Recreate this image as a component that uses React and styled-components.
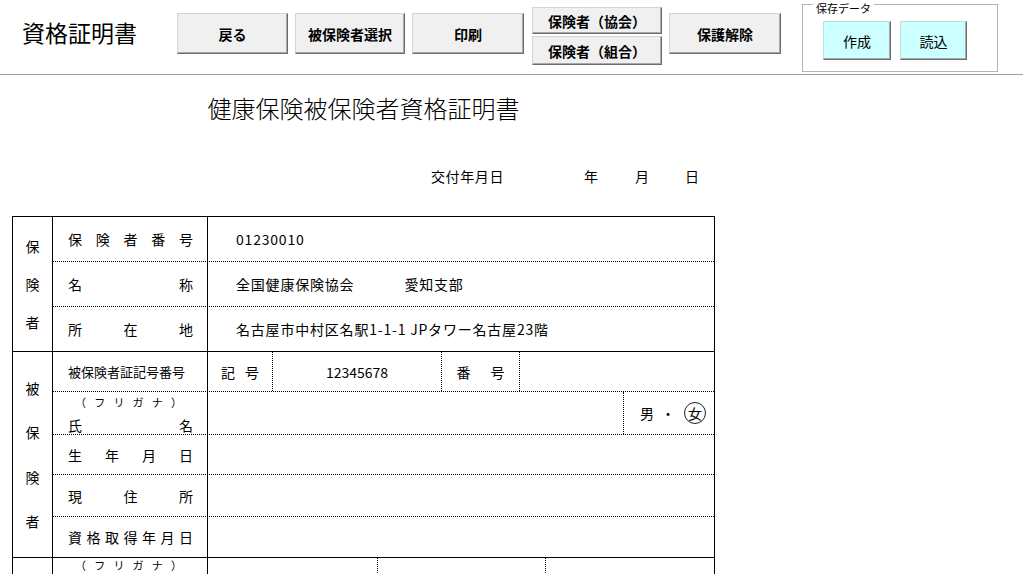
import React from "react"
import styled, { createGlobalStyle } from "styled-components"

const GlobalStyle = createGlobalStyle`
  html, body {
    margin: 0;
    padding: 0;
    background: #fff;
  }
  body {
    font-family: "Noto Sans CJK JP", "Noto Sans", sans-serif;
    color: #000;
    overflow: hidden;
  }
  * {
    box-sizing: border-box;
  }
`

const Page = styled.div`
  width: 1023px;
  height: 574px;
  overflow: hidden;
`

const Toolbar = styled.header`
  display: flex;
  align-items: flex-start;
  height: 75px;
  padding-left: 22px;
  border-bottom: 1px solid #a0a0a0;
`

const AppTitle = styled.h1`
  margin: 16px 0 0;
  width: 155px;
  font-size: 23px;
  line-height: 32px;
  font-weight: 400;
`

const ToolButton = styled.button`
  flex: none;
  width: ${p => p.$w}px;
  height: ${p => p.$h || 41}px;
  margin: ${p => p.$top ?? 13}px 0 0 ${p => p.$left ?? 7}px;
  padding: 0;
  font-family: inherit;
  font-size: 14px;
  font-weight: 700;
  color: #000;
  background: #f0f0f0;
  border: 1px solid;
  border-color: #d4d4d4 #6d6d6d #6d6d6d #d4d4d4;
  box-shadow: inset -1px -1px 0 #a8a8a8;
`

const ButtonStack = styled.div`
  display: flex;
  flex-direction: column;
  gap: 2px;
  margin: 7px 0 0 8px;
`

const SaveGroup = styled.div`
  position: relative;
  display: flex;
  gap: 9px;
  width: 196px;
  height: 68px;
  margin: 4px 0 0 21px;
  padding: 16px 0 0 20px;
  border: 1px solid #b4b4b4;
`

const GroupLegend = styled.span`
  position: absolute;
  top: -5px;
  left: 10px;
  padding: 0 3px;
  background: #fff;
  font-size: 11px;
  line-height: 16px;
`

const SaveButton = styled.button`
  width: ${p => p.$w}px;
  height: 39px;
  padding: 0;
  font-family: inherit;
  font-size: 14px;
  color: #000;
  background: #ccffff;
  border: 1px solid;
  border-color: #b8dede #6d6d6d #6d6d6d #b8dede;
  box-shadow: inset -1px -1px 0 #a8a8a8;
`

const Sheet = styled.main`
  width: 715px;
  padding-left: 12px;
`

const DocTitle = styled.h2`
  margin: 17px 0 0;
  text-align: center;
  font-size: 24px;
  line-height: 32px;
  font-weight: 300;
`

const IssueRow = styled.div`
  display: flex;
  justify-content: flex-end;
  margin-top: 42px;
  padding-right: 16px;
  font-size: 14px;
  line-height: 20px;
`

const IssuePart = styled.span`
  margin-left: ${p => p.$gap || 0}px;
  letter-spacing: ${p => p.$ls || 0}px;
`

const Form = styled.div`
  margin-top: 30px;
  width: 703px;
  border: 1px solid #000;
  border-bottom: none;
  font-size: 14px;
`

const Section = styled.section`
  display: flex;
  height: ${p => p.$h}px;
  border-bottom: ${p => (p.$last ? "none" : "1px solid #000")};
`

const SideLabel = styled.div`
  flex: none;
  width: 40px;
  border-right: 1px solid #000;
  display: flex;
  flex-direction: column;
  align-items: center;
  justify-content: space-evenly;
  line-height: 18px;
`

const Rows = styled.div`
  flex: 1;
  display: flex;
  flex-direction: column;
`

const Row = styled.div`
  display: flex;
  flex: none;
  height: ${p => p.$h}px;
  border-bottom: ${p => (p.$last ? "none" : "1px dotted #000")};
`

const Label = styled.div`
  flex: none;
  width: 155px;
  border-right: 1px solid #000;
  display: flex;
  flex-direction: column;
  justify-content: ${p => (p.$top !== undefined ? "flex-start" : "center")};
  padding: ${p => p.$top || 0}px 14px 0 15px;
`

const SpreadLine = styled.div`
  display: flex;
  justify-content: space-between;
  font-size: ${p => p.$size || 14}px;
  line-height: ${p => p.$lh || 18}px;
  padding: ${p => p.$pad || "0"};
  margin-top: ${p => p.$mt || 0}px;
`

const PlainLabel = styled.div`
  font-size: 13px;
  line-height: 18px;
`

const Value = styled.div`
  flex: 1;
  display: flex;
  align-items: center;
  padding-left: 28px;
  letter-spacing: 0.8px;
  white-space: nowrap;
`

const Spacer = styled.span`
  display: inline-block;
  width: ${p => p.$w}px;
`

const Cell = styled.div`
  flex: ${p => (p.$w ? "none" : 1)};
  width: ${p => (p.$w ? `${p.$w}px` : "auto")};
  display: flex;
  align-items: center;
  justify-content: ${p => p.$justify || "center"};
  gap: ${p => p.$gap || 0}px;
  padding-left: ${p => p.$pl || 0}px;
  border-left: ${p => (p.$dotLeft ? "1px dotted #000" : "none")};
  border-right: ${p => (p.$dotRight ? "1px dotted #000" : "none")};
`

const Dot = styled.span`
  margin: 0 9px 0 7px;
`

const Circled = styled.span`
  display: inline-flex;
  align-items: center;
  justify-content: center;
  width: 22px;
  height: 22px;
  border: 1px solid #222;
  border-radius: 50%;
  font-size: 14px;
  line-height: 1;
`

function Spread({ text, ...rest }) {
  return (
    <SpreadLine {...rest}>
      {[...text].map((c, i) => (
        <span key={i}>{c}</span>
      ))}
    </SpreadLine>
  )
}

function Side({ text }) {
  return (
    <SideLabel>
      {[...text].map((c, i) => (
        <span key={i}>{c}</span>
      ))}
    </SideLabel>
  )
}

export default function App() {
  return (
    <Page>
      <GlobalStyle />
      <Toolbar>
        <AppTitle>資格証明書</AppTitle>
        <ToolButton $w={111} $left={0}>戻る</ToolButton>
        <ToolButton $w={110}>被保険者選択</ToolButton>
        <ToolButton $w={112}>印刷</ToolButton>
        <ButtonStack>
          <ToolButton $w={130} $h={27} $top={0} $left={0}>
            保険者（協会）
          </ToolButton>
          <ToolButton $w={130} $h={29} $top={0} $left={0}>
            保険者（組合）
          </ToolButton>
        </ButtonStack>
        <ToolButton $w={112}>保護解除</ToolButton>
        <SaveGroup>
          <GroupLegend>保存データ</GroupLegend>
          <SaveButton $w={68}>作成</SaveButton>
          <SaveButton $w={67}>読込</SaveButton>
        </SaveGroup>
      </Toolbar>

      <Sheet>
        <DocTitle>健康保険被保険者資格証明書</DocTitle>
        <IssueRow>
          <IssuePart $ls={0.6}>交付年月日</IssuePart>
          <IssuePart $gap={80}>年</IssuePart>
          <IssuePart $gap={37}>月</IssuePart>
          <IssuePart $gap={36}>日</IssuePart>
        </IssueRow>

        <Form>
          <Section $h={135}>
            <Side text="保険者" />
            <Rows>
              <Row $h={45}>
                <Label>
                  <Spread text="保険者番号" />
                </Label>
                <Value>01230010</Value>
              </Row>
              <Row $h={45}>
                <Label>
                  <Spread text="名称" />
                </Label>
                <Value>
                  全国健康保険協会
                  <Spacer $w={50} />
                  愛知支部
                </Value>
              </Row>
              <Row $h={44} $last>
                <Label>
                  <Spread text="所在地" />
                </Label>
                <Value>名古屋市中村区名駅1-1-1 JPタワー名古屋23階</Value>
              </Row>
            </Rows>
          </Section>

          <Section $h={206}>
            <Side text="被保険者" />
            <Rows>
              <Row $h={40}>
                <Label>
                  <PlainLabel>被保険者証記号番号</PlainLabel>
                </Label>
                <Cell $w={65} $gap={10} $dotRight>
                  <span>記</span>
                  <span>号</span>
                </Cell>
                <Cell $w={169} $dotRight>12345678</Cell>
                <Cell $w={78} $gap={20} $dotRight>
                  <span>番</span>
                  <span>号</span>
                </Cell>
                <Cell />
              </Row>
              <Row $h={43}>
                <Label $top={3}>
                  <Spread text="（フリガナ）" $size={11} $lh={14} $pad="0 11px 0 7px" />
                  <Spread text="氏名" $mt={7} />
                </Label>
                <Cell />
                <Cell $w={91} $justify="flex-start" $pl={16} $dotLeft>
                  <span>男</span>
                  <Dot>・</Dot>
                  <Circled>女</Circled>
                </Cell>
              </Row>
              <Row $h={40}>
                <Label>
                  <Spread text="生年月日" />
                </Label>
                <Cell />
              </Row>
              <Row $h={42}>
                <Label>
                  <Spread text="現住所" />
                </Label>
                <Cell />
              </Row>
              <Row $h={40} $last>
                <Label>
                  <Spread text="資格取得年月日" />
                </Label>
                <Cell />
              </Row>
            </Rows>
          </Section>

          <Section $h={60} $last>
            <SideLabel />
            <Rows>
              <Row $h={40}>
                <Label $top={0}>
                  <Spread text="（フリガナ）" $size={11} $lh={14} $pad="0 11px 0 7px" />
                </Label>
                <Cell $w={170} $dotRight />
                <Cell $w={168} $dotRight />
                <Cell />
              </Row>
            </Rows>
          </Section>
        </Form>
      </Sheet>
    </Page>
  )
}
